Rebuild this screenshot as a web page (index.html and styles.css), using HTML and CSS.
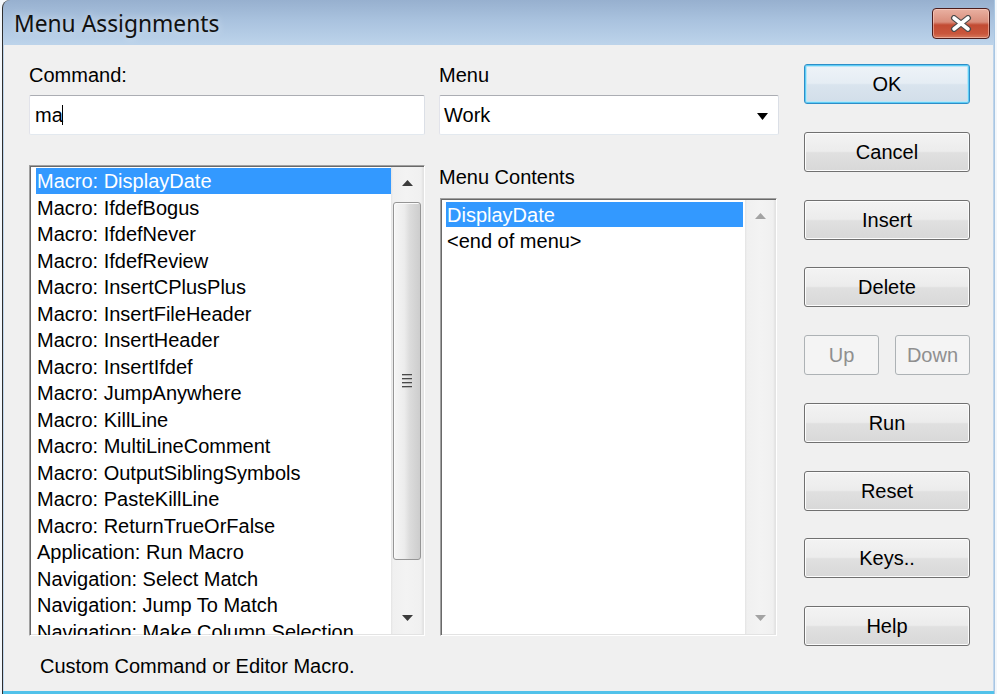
FILE: index.html
```html
<!DOCTYPE html>
<html>
<head>
<meta charset="utf-8">
<title>Menu Assignments</title>
<link rel="stylesheet" href="styles.css">
</head>
<body>
<div class="window">
  <div class="titlebar">
    <span class="title">Menu Assignments</span>
    <div class="close">
      <svg width="22" height="17" viewBox="0 0 22 17">
        <path d="M4 3 L18 14 M18 3 L4 14" stroke="#4a4a4a" stroke-width="6" stroke-linecap="round"/>
        <path d="M4 3 L18 14 M18 3 L4 14" stroke="#ffffff" stroke-width="3.6" stroke-linecap="round"/>
      </svg>
    </div>
  </div>
  <div class="client">
    <div class="col col-left">
      <div class="label">Command:</div>
      <div class="edit"><span>ma</span><span class="caret"></span></div>
      <div class="listbox listbox-left">
        <div class="items">
          <div class="item selected">Macro: DisplayDate</div>
          <div class="item">Macro: IfdefBogus</div>
          <div class="item">Macro: IfdefNever</div>
          <div class="item">Macro: IfdefReview</div>
          <div class="item">Macro: InsertCPlusPlus</div>
          <div class="item">Macro: InsertFileHeader</div>
          <div class="item">Macro: InsertHeader</div>
          <div class="item">Macro: InsertIfdef</div>
          <div class="item">Macro: JumpAnywhere</div>
          <div class="item">Macro: KillLine</div>
          <div class="item">Macro: MultiLineComment</div>
          <div class="item">Macro: OutputSiblingSymbols</div>
          <div class="item">Macro: PasteKillLine</div>
          <div class="item">Macro: ReturnTrueOrFalse</div>
          <div class="item">Application: Run Macro</div>
          <div class="item">Navigation: Select Match</div>
          <div class="item">Navigation: Jump To Match</div>
          <div class="item">Navigation: Make Column Selection</div>
        </div>
        <div class="scrollbar">
          <div class="sb-btn"><svg width="11" height="6" viewBox="0 0 11 6"><polygon points="5.5,0 11,6 0,6" fill="#3c3c3c"/></svg></div>
          <div class="sb-track">
            <div class="thumb">
              <div class="grip"><i></i><i></i><i></i><i></i></div>
            </div>
          </div>
          <div class="sb-btn"><svg width="11" height="6" viewBox="0 0 11 6"><polygon points="0,0 11,0 5.5,6" fill="#3c3c3c"/></svg></div>
        </div>
      </div>
      <div class="status">Custom Command or Editor Macro.</div>
    </div>
    <div class="col col-mid">
      <div class="label">Menu</div>
      <div class="combo"><span>Work</span>
        <svg class="drop" width="11" height="7" viewBox="0 0 11 7"><polygon points="0,0 11,0 5.5,7" fill="#000"/></svg>
      </div>
      <div class="label label-contents">Menu Contents</div>
      <div class="listbox listbox-mid">
        <div class="items">
          <div class="item selected">DisplayDate</div>
          <div class="item">&lt;end of menu&gt;</div>
        </div>
        <div class="scrollbar disabled">
          <div class="sb-btn"><svg width="11" height="6" viewBox="0 0 11 6"><polygon points="5.5,0 11,6 0,6" fill="#a3a3a3"/></svg></div>
          <div class="sb-track"></div>
          <div class="sb-btn"><svg width="11" height="6" viewBox="0 0 11 6"><polygon points="0,0 11,0 5.5,6" fill="#a3a3a3"/></svg></div>
        </div>
      </div>
    </div>
    <div class="col col-right">
      <div class="btn default">OK</div>
      <div class="btn">Cancel</div>
      <div class="btn">Insert</div>
      <div class="btn">Delete</div>
      <div class="btn-row">
        <div class="btn small disabled">Up</div>
        <div class="btn small disabled">Down</div>
      </div>
      <div class="btn">Run</div>
      <div class="btn">Reset</div>
      <div class="btn">Keys..</div>
      <div class="btn">Help</div>
    </div>
  </div>
  <div class="bottom-frame"></div>
</div>
</body>
</html>
```

FILE: styles.css
```css
* { box-sizing: border-box; }
html, body { margin: 0; padding: 0; }
body {
  width: 997px;
  height: 694px;
  overflow: hidden;
  background: #f3f7fb;
  font-family: "Liberation Sans", Arial, sans-serif;
  font-size: 20px;
  color: #000;
}
.window {
  margin-left: 2px;
  width: 993px;
  height: 694px;
  border-left: 1px solid #2e2e2e;
  border-right: 1px solid #a9c6e2;
  border-top-left-radius: 8px;
  background: linear-gradient(to bottom, #97b0cf 0px, #a9c2de 20px, #bcd3ea 44px, #c3d8ee 100%);
  display: flex;
  flex-direction: column;
}
.titlebar {
  height: 45px;
  display: flex;
  align-items: flex-start;
  justify-content: space-between;
  padding-left: 11px;
  padding-right: 4px;
}
.title {
  font-family: "Noto Sans", "Open Sans", sans-serif;
  font-size: 22.8px;
  line-height: 22px;
  margin-top: 13px;
  color: #111;
  text-shadow: 0 0 8px rgba(255,255,255,0.6);
}
.close {
  margin-top: 8px;
  width: 58px;
  height: 31px;
  border: 1px solid #4b1d1d;
  border-radius: 4px;
  background: linear-gradient(to bottom, #e9b1a2 0%, #d98d7b 45%, #c24b33 55%, #c9563c 85%, #d67a5e 100%);
  box-shadow: inset 0 0 0 1px rgba(255,220,210,0.5);
  display: flex;
  align-items: center;
  justify-content: center;
}
.client {
  flex: 1;
  margin-left: 1px;
  margin-right: 1px;
  background: #f0f0f0;
  display: flex;
  padding-left: 25px;
}
.bottom-frame {
  height: 3px;
  background: #52c2ea;
}
.col { display: flex; flex-direction: column; flex: none; }
.col-left { width: 396px; }
.col-mid { width: 340px; margin-left: 14px; }
.col-right { width: 166px; margin-left: 25px; padding-top: 19px; gap: 27.75px; }
.label {
  line-height: 20px;
  height: 20px;
  margin-top: 20px;
  white-space: nowrap;
}
.label-contents { margin-top: 32px; }
.edit, .combo {
  margin-top: 10px;
  height: 40px;
  background: #fff;
  border: 1px solid;
  border-color: #abadb3 #dbdfe6 #e3e9ef #e2e3ea;
  border-radius: 2px;
  display: flex;
  align-items: center;
  line-height: 20px;
}
.edit { padding-left: 5px; }
.caret {
  display: inline-block;
  width: 1px;
  height: 20px;
  background: #000;
  margin-left: -1px;
}
.combo {
  padding-left: 4px;
  padding-right: 10px;
  justify-content: space-between;
}
.drop { margin-top: 2px; }
.listbox {
  display: flex;
  background: #fff;
  border: 1px solid;
  border-color: #a0a0a0 #ffffff #ffffff #a0a0a0;
  box-shadow: inset 1px 1px 0 #696969, inset -1px -1px 0 #e3e3e3;
}
.listbox-left {
  margin-top: 30px;
  height: 471px;
}
.listbox-mid {
  margin-top: 11px;
  margin-left: 1px;
  width: 337px;
  height: 438px;
}
.items {
  flex: 1;
  overflow: hidden;
  padding-top: 2px;
  padding-left: 6px;
}
.listbox-mid .items { padding-left: 5px; padding-right: 2px; padding-top: 2.5px; }
.item {
  height: 26.5px;
  line-height: 26.5px;
  padding-left: 1px;
  white-space: nowrap;
}
.item.selected {
  background: #3399ff;
  color: #fff;
  height: 25.5px;
}
.item.selected + .item { margin-top: 1px; }
.scrollbar {
  width: 32px;
  margin: 1px 1px 1px 0;
  display: flex;
  flex-direction: column;
  background: linear-gradient(to right, #e3e3e3 0, #f0f0f0 2px, #f3f3f3 50%, #f0f0f0 calc(100% - 2px), #e3e3e3 100%);
}
.listbox-mid .scrollbar { width: 30px; }
.sb-btn {
  height: 32px;
  display: flex;
  align-items: center;
  justify-content: center;
}
.sb-track {
  flex: 1;
  padding: 3px 2px 42px 2px;
}
.thumb {
  height: 100%;
  border: 1px solid #959595;
  border-radius: 3px;
  background: linear-gradient(to right, #f6f6f6 0%, #ececec 40%, #dcdcdc 60%, #cdcdcd 100%);
  box-shadow: inset 1px 1px 0 #fbfbfb;
  display: flex;
  align-items: center;
  justify-content: center;
}
.grip {
  display: flex;
  flex-direction: column;
  gap: 2px;
}
.grip i {
  display: block;
  width: 10px;
  height: 2px;
  background: #4a4a4a;
  border-bottom: 1px solid #b5b5b5;
}
.status {
  margin-top: 20px;
  padding-left: 11px;
  line-height: 20px;
  white-space: nowrap;
}
.btn {
  height: 40px;
  border: 1px solid #707070;
  border-radius: 3px;
  background: linear-gradient(to bottom, #f3f3f3 0%, #ececec 48%, #e0e0e0 52%, #d8d8d8 100%);
  box-shadow: inset 0 0 0 1px #fcfcfc;
  display: flex;
  align-items: center;
  justify-content: center;
  line-height: 20px;
}
.btn.default {
  border-color: #2d8ec8;
  background: linear-gradient(to bottom, #eef3f8 0%, #e5edf4 48%, #d9e4ee 52%, #d2dee9 100%);
  box-shadow: inset 0 0 0 1px #5fcdf5, inset 0 0 0 2px #b9e6f8;
}
.btn-row {
  display: flex;
  justify-content: space-between;
}
.btn.small { width: 75px; }
.btn.disabled {
  border-color: #adb2b5;
  background: #f4f4f4;
  box-shadow: none;
  color: #8f8f8f;
}
```
